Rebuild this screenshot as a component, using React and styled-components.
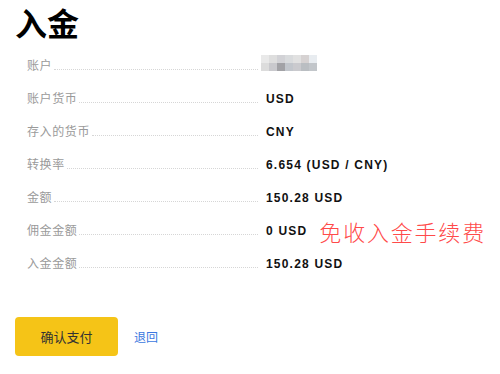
import React from "react";
import styled, { createGlobalStyle } from "styled-components";

const GlobalStyle = createGlobalStyle`
  body {
    margin: 0;
    background: #fff;
    font-family: "Liberation Sans", "Noto Sans CJK SC", sans-serif;
  }
`;

const Page = styled.div`
  width: 500px;
  height: 374px;
  padding: 0 15px;
  box-sizing: border-box;
`;

const Title = styled.h1`
  margin: 0;
  padding-top: 2px;
  font-family: "Noto Sans CJK SC", sans-serif;
  font-size: 32px;
  font-weight: 700;
  line-height: 40px;
  color: #000;
`;

const List = styled.div`
  margin-top: 7px;
  padding-left: 12px;
`;

const Row = styled.div`
  display: flex;
  align-items: center;
  height: 33px;
  white-space: nowrap;
`;

const LabelCell = styled.div`
  display: flex;
  align-items: baseline;
  width: 231px;
  flex-shrink: 0;
  line-height: 20px;
  margin-top: -1px;
`;

const Label = styled.span`
  font-family: "Noto Sans CJK SC", sans-serif;
  font-size: 12px;
  letter-spacing: 0.6px;
  color: #9a9a9a;
`;

const Leader = styled.span`
  flex: 1;
  margin-left: 2px;
  border-bottom: 1px dotted #d6d6d6;
`;

const Value = styled.span`
  flex-shrink: 0;
  margin-left: 8px;
  font-family: "Liberation Sans", sans-serif;
  font-size: 12px;
  font-weight: 700;
  line-height: 20px;
  letter-spacing: 1.2px;
  color: #111;
`;

const Note = styled.span`
  flex-shrink: 0;
  margin-left: 12px;
  font-family: "Noto Sans CJK SC", sans-serif;
  font-size: 22px;
  font-weight: 300;
  line-height: 24px;
  letter-spacing: 1.8px;
  color: #ff4a4a;
`;

const Mosaic = styled.div`
  display: grid;
  grid-template-columns: repeat(7, 8px);
  grid-auto-rows: 8px;
  margin-left: 3px;
  margin-top: -5px;
`;

const Cell = styled.span`
  background: ${(p) => p.$c};
`;

const Actions = styled.div`
  display: flex;
  align-items: center;
  gap: 16px;
  margin-top: 37px;
`;

const PrimaryButton = styled.button`
  width: 103px;
  height: 39px;
  border: none;
  border-radius: 4px;
  background: #f5c417;
  font-family: "Noto Sans CJK SC", sans-serif;
  font-size: 13px;
  color: #333;
  cursor: pointer;
`;

const BackLink = styled.a`
  font-family: "Noto Sans CJK SC", sans-serif;
  font-size: 12px;
  color: #3b78e0;
  text-decoration: none;
`;

const mosaic = [
  "#e9e9e9", "#dedede", "#d2d2d6", "#d9dbdd", "#e1e1e1", "#d6d2d2", "#e8ecf0",
  "#dcdcdc", "#c9c9cd", "#a2a2a6", "#c2c6cc", "#cacace", "#babec2", "#c2c6ca",
];

const rows = [
  { label: "账户", mosaic: true },
  { label: "账户货币", value: "USD" },
  { label: "存入的货币", value: "CNY" },
  { label: "转换率", value: "6.654 (USD / CNY)" },
  { label: "金额", value: "150.28 USD" },
  { label: "佣金金额", value: "0 USD", note: "免收入金手续费" },
  { label: "入金金额", value: "150.28 USD" },
];

export default function App() {
  return (
    <Page>
      <GlobalStyle />
      <Title>入金</Title>
      <List>
        {rows.map((r) => (
          <Row key={r.label}>
            <LabelCell>
              <Label>{r.label}</Label>
              <Leader />
            </LabelCell>
            {r.mosaic ? (
              <Mosaic>
                {mosaic.map((c, i) => (
                  <Cell key={i} $c={c} />
                ))}
              </Mosaic>
            ) : (
              <Value>{r.value}</Value>
            )}
            {r.note && <Note>{r.note}</Note>}
          </Row>
        ))}
      </List>
      <Actions>
        <PrimaryButton>确认支付</PrimaryButton>
        <BackLink href="#">退回</BackLink>
      </Actions>
    </Page>
  );
}
